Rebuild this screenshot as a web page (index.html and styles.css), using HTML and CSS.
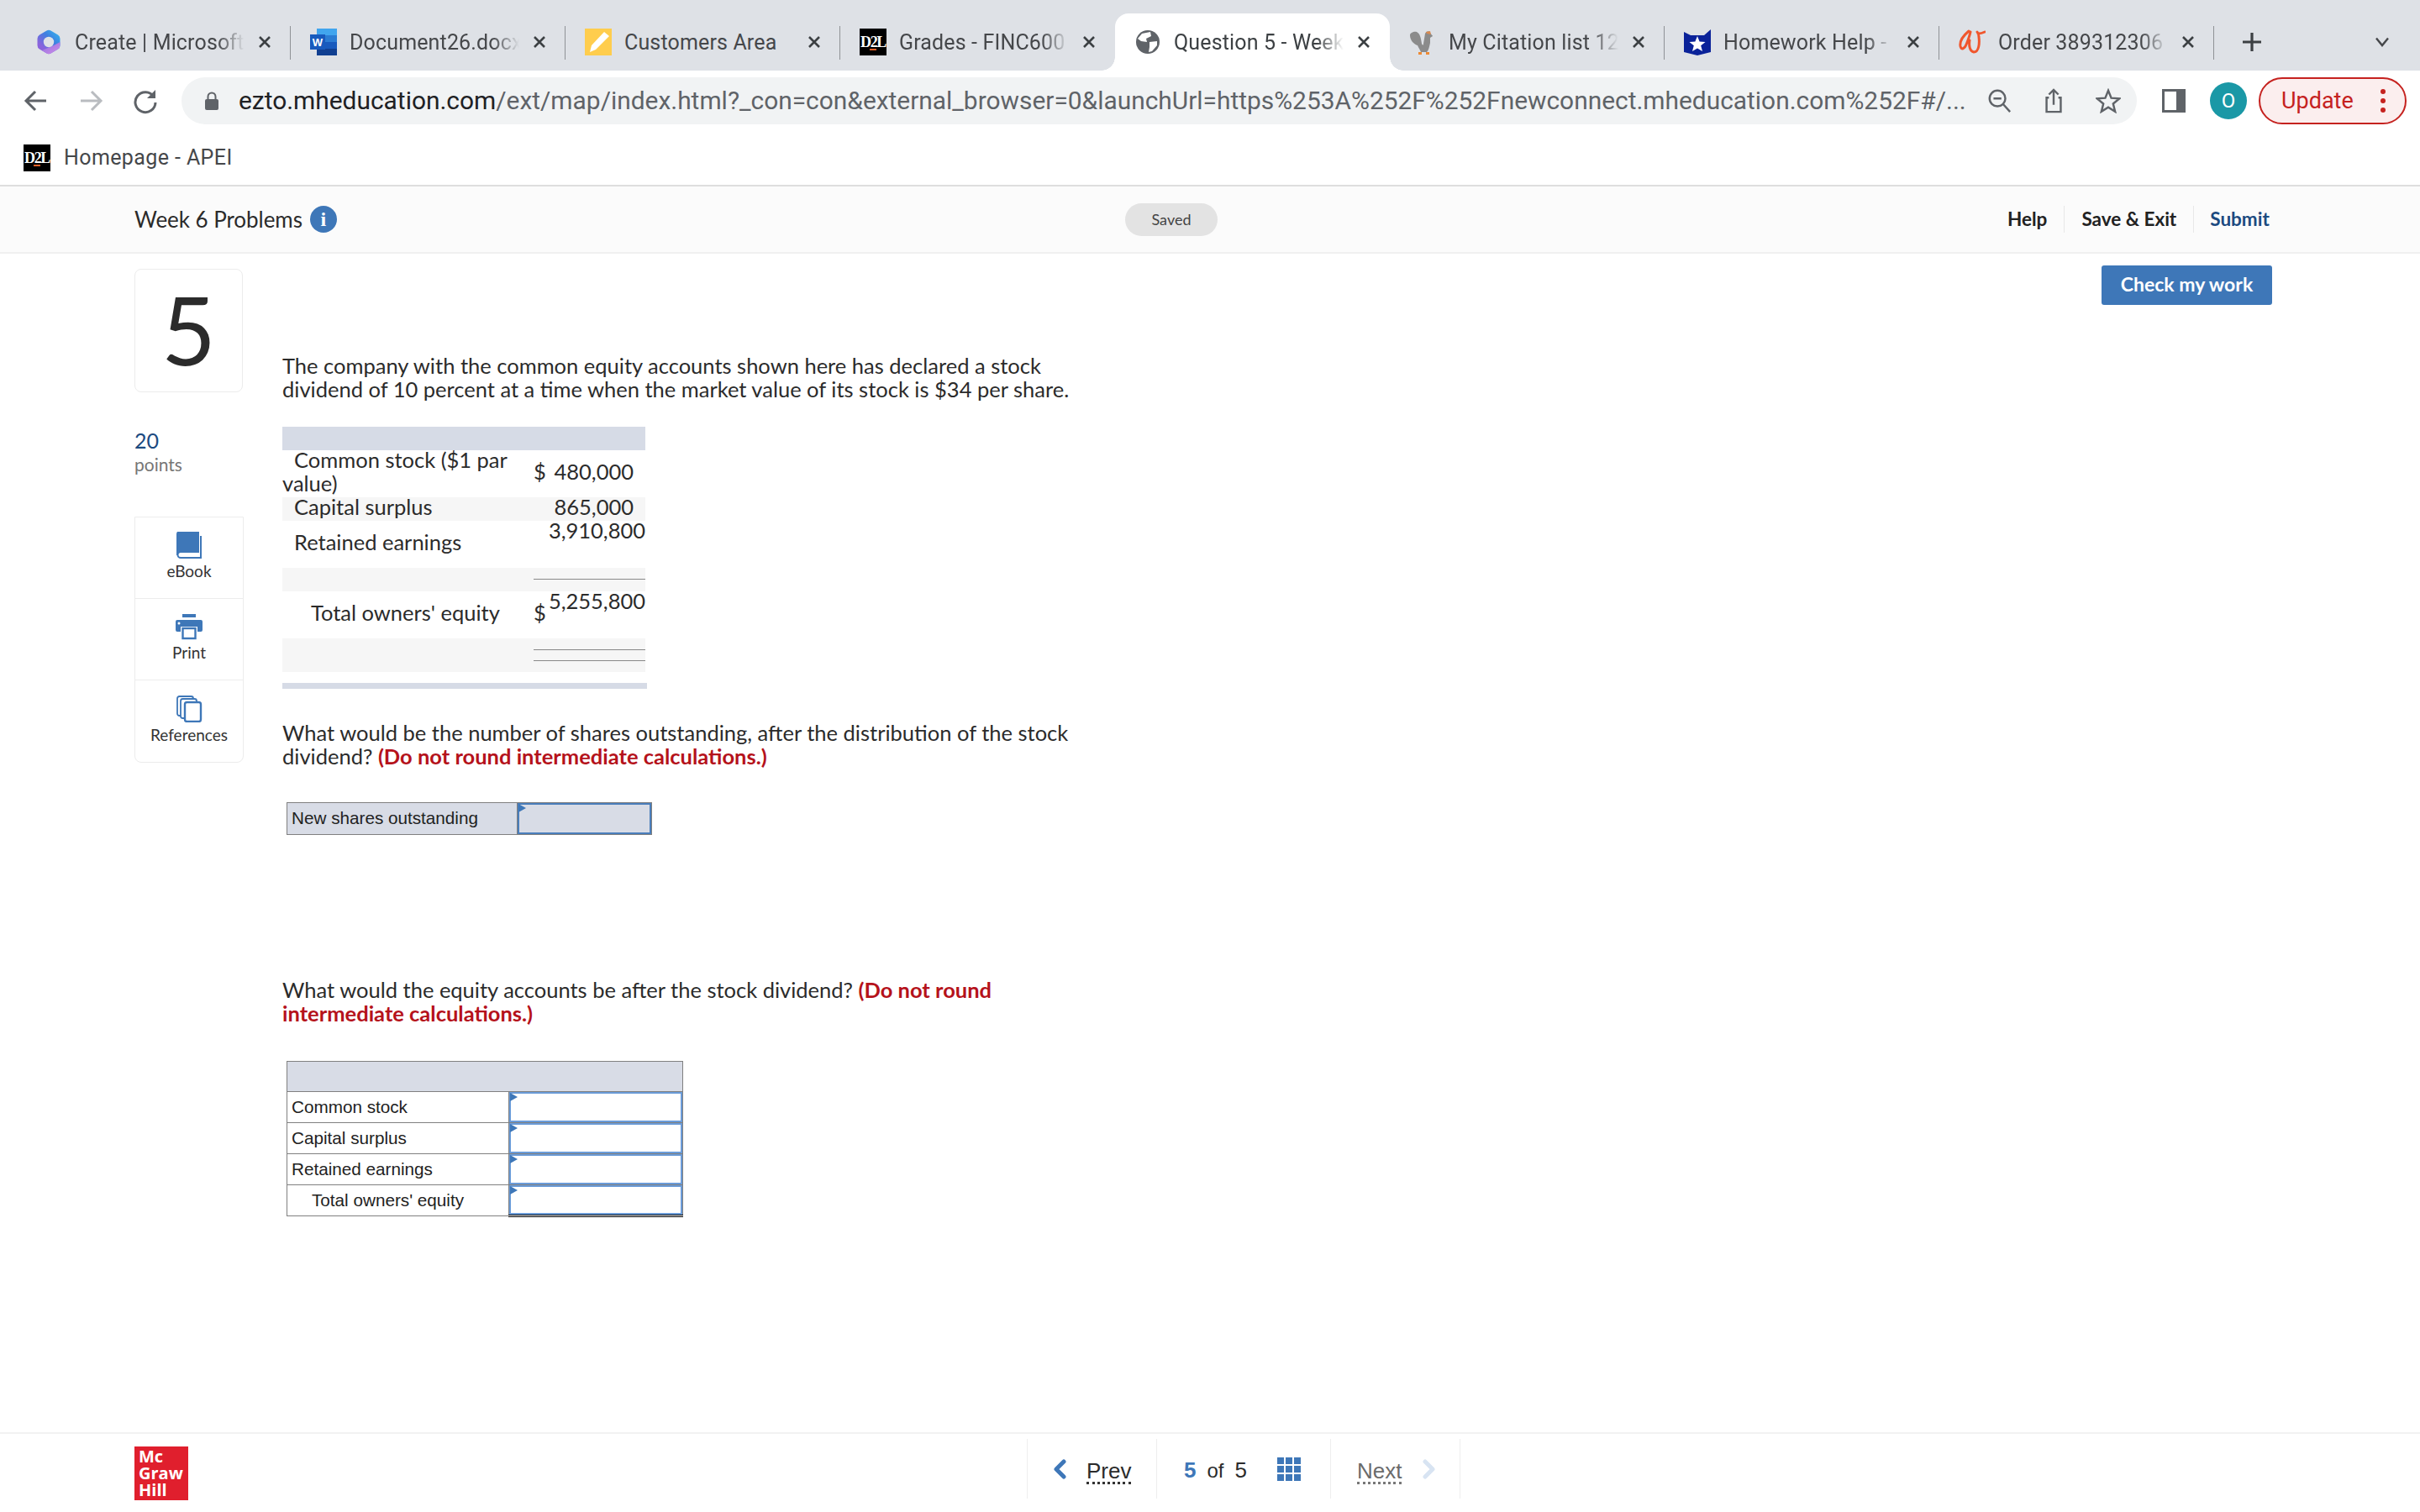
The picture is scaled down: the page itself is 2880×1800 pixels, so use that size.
FILE: index.html
```html
<!DOCTYPE html>
<html lang="en">
<head>
<meta charset="utf-8">
<title>Question 5 - Week 6 Problems</title>
<link rel="stylesheet" href="styles.css">
</head>
<body>
<div class="tabstrip">
  <div class="tab sep">
    <svg class="fav" viewBox="0 0 32 32"><defs><linearGradient id="m1" x1="0.9" y1="0" x2="0.2" y2="0.7"><stop offset="0" stop-color="#35b6ee"/><stop offset=".5" stop-color="#3f7fe0"/><stop offset="1" stop-color="#8a63dc"/></linearGradient><linearGradient id="m2" x1="0" y1="0" x2="1" y2="1"><stop offset="0" stop-color="#8f6fe0"/><stop offset="1" stop-color="#d18ee8"/></linearGradient></defs><path d="M13.500 2.500 Q16 1 18.500 2.500 L27 7.500 Q29.500 9 29.500 12 V20 Q29.500 23 27 24.500 L18.500 29.500 Q16 31 13.500 29.500 L5 24.500 Q2.500 23 2.500 20 V12 Q2.500 9 5 7.500 Z" fill="url(#m1)"/><path d="M29.500 16 V20 Q29.500 23 27 24.500 L18.500 29.500 Q16 31 13.500 29.500 L8 26 L22 20 Z" fill="url(#m2)"/><circle cx="16" cy="16" r="6.200" fill="#dee1e6"/></svg>
    <span class="title">Create | Microsoft</span><svg class="close" viewBox="0 0 16 16"><path d="M2 2 L14 14 M14 2 L2 14"/></svg>
  </div>
  <div class="tab sep">
    <svg class="fav" viewBox="0 0 32 32"><rect x="8" width="24" height="8" fill="#41a5ee"/><rect x="8" y="8" width="24" height="8" fill="#2b7cd3"/><rect x="8" y="16" width="24" height="8" fill="#185abd"/><rect x="8" y="24" width="24" height="8" fill="#103f91"/><rect y="7" width="18" height="18" fill="#185abd"/><text x="9" y="21" class="favw">W</text></svg>
    <span class="title">Document26.docx</span><svg class="close" viewBox="0 0 16 16"><path d="M2 2 L14 14 M14 2 L2 14"/></svg>
  </div>
  <div class="tab sep">
    <svg class="fav" viewBox="0 0 32 32"><rect width="32" height="32" fill="#ffcd4d"/><path d="M6 28 L8 20 L23 4 L29 9 L13 25 Z" fill="#fff"/></svg>
    <span class="title plain">Customers Area</span><svg class="close" viewBox="0 0 16 16"><path d="M2 2 L14 14 M14 2 L2 14"/></svg>
  </div>
  <div class="tab">
    <span class="d2l">D2L</span>
    <span class="title">Grades - FINC600</span><svg class="close" viewBox="0 0 16 16"><path d="M2 2 L14 14 M14 2 L2 14"/></svg>
  </div>
  <div class="tab active">
    <svg class="fav" viewBox="0 0 32 32"><circle cx="16" cy="16" r="14" fill="#5f6368"/><path d="M9 6 L19 4 L20 9 L14 12 L15 16 L8 15 L4 12 Z M18 16 L27 15 L27 20 L21 27 L17 28 L18 22 Z" fill="#fff"/></svg>
    <span class="title">Question 5 - Week</span><svg class="close" viewBox="0 0 16 16"><path d="M2 2 L14 14 M14 2 L2 14"/></svg>
  </div>
  <div class="tab sep">
    <svg class="fav" viewBox="0 0 32 32"><path d="M1 8 C1 5 6 3 9 4 C13 6 14 11 15 18 C16 20 17 20 17 18 L19 6 C20 3 24 2 25 5 C26 7 28 8 28 9 L25 11 L25 17 C24 22 23 26 21 28 L14 28 C13 25 11 23 10 20 C6 19 1 14 1 8 Z" fill="#8b8b8b"/><path d="M20 4 L25 3 L26 7 L21 6 Z" fill="#d98a50"/><rect x="11" y="28" width="4" height="3" fill="#ee8a33"/><rect x="20" y="28" width="4" height="3" fill="#ee8a33"/></svg>
    <span class="title">My Citation list 12</span><svg class="close" viewBox="0 0 16 16"><path d="M2 2 L14 14 M14 2 L2 14"/></svg>
  </div>
  <div class="tab sep">
    <svg class="fav" viewBox="0 0 32 32"><path d="M0 4 L8 8 L24 8 L32 1 V28 L16 32 L0 28 Z" fill="#0a2299"/><path d="M16 9 L18.600 15.600 L25.500 16 L20.200 20.300 L22 27 L16 23.400 L10 27 L11.800 20.300 L6.500 16 L13.400 15.600 Z" fill="#fff"/></svg>
    <span class="title">Homework Help -</span><svg class="close" viewBox="0 0 16 16"><path d="M2 2 L14 14 M14 2 L2 14"/></svg>
  </div>
  <div class="tab sep">
    <svg class="fav" viewBox="0 0 32 32"><path d="M12 3 C6 8 1 15 2 21 C3 26 7 24 9 19 C11 14 13 9 14 4 M13 14 C12 20 13 27 18 28 C24 28 25 18 24 10 C24 7 23 5 22 4 M23 6 C26 6 29 5 31 4" fill="none" stroke="#f0562d" stroke-width="3" stroke-linecap="round"/></svg>
    <span class="title">Order 389312306</span><svg class="close" viewBox="0 0 16 16"><path d="M2 2 L14 14 M14 2 L2 14"/></svg>
  </div>
  <svg class="plus" viewBox="0 0 24 24"><path d="M12 1 V23 M1 12 H23" stroke="#3c4043" stroke-width="3.200"/></svg>
  <svg class="tabmenu" viewBox="0 0 18 12"><path d="M2 1.500 L9 10 L16 1.500" fill="none" stroke="#45474a" stroke-width="2.400"/></svg>
</div>

<div class="toolbar">
  <svg class="navicon" viewBox="0 0 32 32"><path d="M28 16 H5 M15 5 L4 16 L15 27" fill="none" stroke="#5f6368" stroke-width="3"/></svg>
  <svg class="navicon" viewBox="0 0 32 32"><path d="M4 16 H27 M17 5 L28 16 L17 27" fill="none" stroke="#b9bcc0" stroke-width="3"/></svg>
  <svg class="navicon" viewBox="0 0 32 32"><path d="M26 11 A12 12 0 1 0 28 18" fill="none" stroke="#5f6368" stroke-width="3"/><path d="M28 3 V13 H18 Z" fill="#5f6368"/></svg>
  <div class="omnibox">
    <svg class="lock" viewBox="0 0 18 24"><path d="M4.500 10 V7 A4.500 4.500 0 0 1 13.500 7 V10" fill="none" stroke="#5f6368" stroke-width="2"/><rect x="1" y="10" width="16" height="13" rx="2" fill="#5f6368"/></svg>
    <span class="url"><b>ezto.mheducation.com</b>/ext/map/index.html?_con=con&amp;external_browser=0&amp;launchUrl=https%253A%252F%252Fnewconnect.mheducation.com%252F#/...</span>
    <svg class="omni-ic" viewBox="0 0 32 32"><circle cx="14" cy="13" r="10" fill="none" stroke="#5f6368" stroke-width="2.600"/><path d="M21 20 L30 30 M9 13 H19" stroke="#5f6368" stroke-width="2.600"/></svg>
    <svg class="omni-ic" viewBox="0 0 32 32"><path d="M10 12 H7 V30 H25 V12 H22 M16 21 V2 M10 8 L16 2 L22 8" fill="none" stroke="#5f6368" stroke-width="2.600"/></svg>
    <svg class="omni-ic" viewBox="0 0 32 32"><path d="M16 3 L19.800 12.400 L30 13.200 L22.200 19.700 L24.700 29.700 L16 24.300 L7.300 29.700 L9.800 19.700 L2 13.200 L12.200 12.400 Z" fill="none" stroke="#5f6368" stroke-width="2.600"/></svg>
  </div>
  <svg class="panel" viewBox="0 0 28 28"><rect width="28" height="28" fill="#5f6368"/><rect x="3" y="3" width="14" height="22" fill="#fff"/></svg>
  <span class="avatar">O</span>
  <div class="update"><span>Update</span><span class="dots"><i></i><i></i><i></i></span></div>
</div>

<div class="bookmarks"><span class="d2l">D2L</span><span class="bm-text">Homepage - APEI</span></div>

<header class="qhead">
  <div class="qhead-left"><span class="qhead-title">Week 6 Problems</span>
    <span class="info">i</span></div>
  <span class="saved">Saved</span>
  <nav class="qnav"><a class="qnav-help">Help</a><a class="qnav-save">Save &amp; Exit</a><a class="qnav-submit">Submit</a></nav>
</header>

<main class="main">
  <aside class="side">
    <div class="qnum">5</div>
    <div class="pts">20</div>
    <div class="pts-label">points</div>
    <div class="tools">
      <div class="tool">
        <svg class="tool-ic" viewBox="0 0 30 32"><path d="M1 28 V3 A3 3 0 0 1 4 0 H26 V24 H5 A3 3 0 0 0 5 31 H29 V5" fill="none" stroke="#3e77b8" stroke-width="2"/><path d="M1 28 V3 A3 3 0 0 1 4 0 H25 V24 H5 A4 4 0 0 0 1 28 Z" fill="#3e77b8"/></svg>
        <span>eBook</span>
      </div>
      <div class="tool">
        <svg class="tool-ic" viewBox="0 0 32 32"><rect x="8" y="1" width="16" height="4" fill="#3e77b8"/><path d="M2 8 H30 A2 2 0 0 1 32 10 V20 A2 2 0 0 1 30 22 H26 V16 H6 V22 H2 A2 2 0 0 1 0 20 V10 A2 2 0 0 1 2 8 Z" fill="#3e77b8"/><circle cx="4" cy="12" r="1.500" fill="#fff"/><rect x="8.500" y="18" width="15" height="12" fill="#fff" stroke="#3e77b8" stroke-width="2.400"/></svg>
        <span>Print</span>
      </div>
      <div class="tool">
        <svg class="tool-ic" viewBox="0 0 30 32"><g fill="#fff" stroke="#3e77b8" stroke-width="1.800"><rect x="1" y="1" width="19" height="23" rx="2.500"/><rect x="5" y="4" width="19" height="23" rx="2.500"/></g><rect x="10" y="8" width="19" height="23" rx="2.500" fill="#fff" stroke="#3e77b8" stroke-width="2.400"/></svg>
        <span>References</span>
      </div>
    </div>
  </aside>

  <section class="question">
    <p class="q-intro">The company with the common equity accounts shown here has declared a stock<br>dividend of 10 percent at a time when the market value of its stock is $34 per share.</p>
    <table class="equity">
      <colgroup><col class="c-lab"><col class="c-cur"><col class="c-val"></colgroup>
      <tr class="eq-head"><td colspan="3"></td></tr>
      <tr class="h56"><td class="lab"><div class="t"><span class="ind">Common stock ($1 par</span><br>value)</div></td><td class="cur"><div class="t">$</div></td><td class="val pad"><div class="t">480,000</div></td></tr>
      <tr class="alt"><td class="lab ind-cell"><div class="t">Capital surplus</div></td><td class="cur"></td><td class="val pad"><div class="t">865,000</div></td></tr>
      <tr class="h56"><td class="lab ind-cell"><div class="t">Retained earnings</div></td><td class="cur"></td><td class="val top"><div class="t">3,910,800</div></td></tr>
      <tr class="alt"><td></td><td colspan="2" class="rule"><i></i></td></tr>
      <tr class="h56"><td class="lab ind2"><div class="t">Total owners' equity</div></td><td class="cur"><div class="t">$</div></td><td class="val top"><div class="t">5,255,800</div></td></tr>
      <tr class="alt h40"><td></td><td colspan="2" class="rule dbl"><i></i><i></i></td></tr>
    </table>
    <div class="eq-foot"></div>

    <p class="q2">What would be the number of shares outstanding, after the distribution of the stock<br>dividend? <strong>(Do not round intermediate calculations.)</strong></p>
    <table class="answer shares">
      <colgroup><col class="c-s1"><col></colgroup>
      <tr><td class="a-lab">New shares outstanding</td><td class="a-in"></td></tr>
    </table>

    <p class="q3">What would the equity accounts be after the stock dividend? <strong>(Do not round<br>intermediate calculations.)</strong></p>
    <table class="answer accounts">
      <colgroup><col class="c-a1"><col></colgroup>
      <tr class="a-head"><td colspan="2"></td></tr>
      <tr><td class="a-lab">Common stock</td><td class="a-in"></td></tr>
      <tr><td class="a-lab">Capital surplus</td><td class="a-in"></td></tr>
      <tr><td class="a-lab">Retained earnings</td><td class="a-in"></td></tr>
      <tr><td class="a-lab a-ind">Total owners' equity</td><td class="a-in a-total"></td></tr>
    </table>
  </section>

  <button class="check">Check my work</button>
</main>

<footer class="foot">
  <div class="logo-slot"><div class="logo">Mc<br>Graw<br>Hill</div></div>
  <div class="pager">
    <div class="pg pg-prev">
      <svg class="chev" viewBox="0 0 16 24"><path d="M13 3 L4 12 L13 21" fill="none" stroke="#3e77b8" stroke-width="5" stroke-linecap="round" stroke-linejoin="round"/></svg>
      <span class="pg-link">Prev</span>
    </div>
    <div class="pg pg-mid">
      <span class="pg-cur">5</span><span class="pg-of">of</span><span class="pg-tot">5</span>
      <span class="pg-grid"><i></i><i></i><i></i><i></i><i></i><i></i><i></i><i></i><i></i></span>
    </div>
    <div class="pg pg-next">
      <span class="pg-link dim">Next</span>
      <svg class="chev" viewBox="0 0 16 24"><path d="M3 3 L12 12 L3 21" fill="none" stroke="#d8e4f2" stroke-width="5" stroke-linecap="round" stroke-linejoin="round"/></svg>
    </div>
  </div>
</footer>
</body>
</html>
```
FILE: styles.css
```css
* { box-sizing: border-box; }
html, body { margin: 0; padding: 0; }
body { width: 2880px; height: 1800px; overflow: hidden; display: flex; flex-direction: column; background: #fff; font-family: "Lato", "Liberation Sans", sans-serif; color: #2b2b2b; }

/* browser chrome */
.tabstrip { flex: 0 0 84px; background: #dee1e6; display: flex; align-items: flex-end; padding-left: 19px; position: relative; font-family: "Roboto", sans-serif; }
.tab { flex: 0 0 327px; min-width: 0; width: 327px; height: 68px; display: flex; align-items: center; padding: 0 23px 0 23px; position: relative; font-size: 25px; letter-spacing: 0.15px; color: #45474a; }
.tab.sep::after { content: ""; position: absolute; right: 0; top: 15px; width: 1.500px; height: 40px; background: #8f9296; }
.tab.active { background: #fff; border-radius: 16px 16px 0 0; color: #3c4043; }
.tab.active::before, .tab.active::after { content: ""; position: absolute; bottom: 0; width: 16px; height: 16px; }
.tab.active::before { left: -16px; background: radial-gradient(circle at 0 0, #dee1e6 15.500px, #fff 16px); }
.tab.active::after { right: -16px; background: radial-gradient(circle at 100% 0, #dee1e6 15.500px, #fff 16px); }
.fav { width: 32px; height: 32px; flex: none; }
.favw { font: bold 13px "Liberation Sans", sans-serif; fill: #fff; text-anchor: middle; }
.d2l { flex: none; position: relative; width: 32px; height: 32px; background: #000; color: #fff; font: bold 18px/1 "Liberation Serif", serif; letter-spacing: -1.400px; display: flex; justify-content: center; align-items: center; overflow: hidden; }
.d2l::after { content: ""; position: absolute; left: 12px; bottom: 6px; width: 8px; height: 2px; background: #e8622a; }
.title { flex: 1 1 0; min-width: 0; margin-left: 15px; white-space: nowrap; overflow: hidden; -webkit-mask-image: linear-gradient(90deg, #000 calc(100% - 32px), transparent); mask-image: linear-gradient(90deg, #000 calc(100% - 32px), transparent); }
.title.plain { -webkit-mask-image: none; mask-image: none; }
.close { flex: none; margin-left: 16px; width: 16px; height: 16px; fill: none; stroke: #3c4043; stroke-width: 2.600; }
.plus { width: 24px; height: 24px; margin: 0 0 22px 33px; flex: none; }
.tabmenu { width: 18px; height: 12px; margin: 0 0 28px 134px; flex: none; }

.toolbar { flex: 0 0 88px; display: flex; align-items: flex-start; padding: 8px 16px 0 27px; background: #fff; font-family: "Roboto", sans-serif; }
.navicon { width: 32px; height: 32px; margin: 12px 33px 0 0; flex: none; }
.omnibox { width: 2327px; height: 56px; margin-left: -6px; background: #f1f3f4; border-radius: 28px; display: flex; align-items: center; padding-left: 27px; flex: none; }
.lock { width: 18px; height: 24px; flex: none; }
.url { margin-left: 23px; width: 2080px; flex: none; white-space: nowrap; overflow: hidden; font-size: 29.900px; line-height: 40px; color: #5f6368; }
.url b { font-weight: 400; color: #202124; }
.omni-ic { width: 30px; height: 30px; flex: none; margin-right: 35px; }
.panel { width: 28px; height: 28px; margin: 14px 0 0 30px; flex: none; }
.avatar { flex: none; width: 44px; height: 44px; border-radius: 50%; margin: 6px 0 0 29px; background: #1a98a6; color: #fff; font-size: 24px; display: flex; align-items: center; justify-content: center; }
.update { flex: none; width: 176px; height: 56px; margin-left: 14px; border: 2px solid #c5221f; border-radius: 28px; background: #fbeeee; color: #c5221f; font-size: 27px; display: flex; align-items: center; padding-left: 25px; justify-content: space-between; padding-right: 23px; }
.dots { display: flex; flex-direction: column; gap: 5px; }
.dots i { width: 6px; height: 6px; border-radius: 50%; background: #c5221f; display: block; }

.bookmarks { flex: 0 0 50px; padding: 0 0 0 28px; display: flex; align-items: flex-start; background: #fff; font-family: "Roboto", sans-serif; border-bottom: 2px solid #dedede; }
.bm-text { margin-left: 16px; font-size: 25px; letter-spacing: 0.4px; line-height: 32px; color: #45474a; }

/* assignment header */
.qhead { flex: 0 0 80px; background: #fbfbfb; border-bottom: 2px solid #f0f0f0; display: flex; align-items: center; padding-left: 160px; }
.qhead-left { flex: 0 0 1179px; display: flex; align-items: center; }
.qhead-title { font-size: 26px; letter-spacing: -0.05px; color: #2b2b2b; }
.info { width: 32px; height: 32px; border-radius: 50%; margin-left: 9px; background: #3e77b8; color: #fff; font: bold 24px/32px "Liberation Serif", serif; text-align: center; }
.saved { width: 110px; height: 39px; border-radius: 20px; background: #e3e3e3; font-size: 18px; line-height: 39px; text-align: center; color: #444; }
.qnav { margin-left: 940px; display: flex; align-items: center; font-size: 22.500px; font-weight: 700; color: #222; }
.qnav a { display: block; height: 32px; line-height: 32px; }
.qnav-help { padding-right: 20px; border-right: 1px solid #e8e8e8; }
.qnav-save { padding: 0 20px; border-right: 1px solid #e8e8e8; }
.qnav-submit { padding-left: 19px; color: #1c4a80; }

/* main */
.main { flex: 1 1 auto; display: flex; align-items: flex-start; padding: 14px 176px 0 160px; min-height: 0; }
.side { flex: 0 0 130px; margin-top: 4px; }
.qnum { width: 129px; height: 147px; border: 1px solid #ececec; border-radius: 8px; font-size: 112px; line-height: 141px; text-align: center; color: #2b2b2b; }
.pts { margin-top: 42px; font-size: 25px; line-height: 30px; color: #1c4a80; }
.pts-label { font-size: 21px; line-height: 28px; color: #767676; }
.tools { margin-top: 48px; border: 1px solid #ececec; border-radius: 0 0 8px 8px; width: 130px; }
.tool { height: 97px; display: flex; flex-direction: column; align-items: center; justify-content: flex-end; padding-bottom: 20px; font-size: 19px; line-height: 24px; color: #333; border-bottom: 1px solid #ececec; }
.tool:last-child { border-bottom: 0; }
.tool-ic { width: 32px; height: 32px; margin-bottom: 3px; }

.question { flex: 0 0 auto; width: 1000px; margin-left: 46px; font-size: 25.500px; line-height: 28px; color: #2b2b2b; }
.question p { margin: 0; }
.question strong { color: #b5121b; }
.question .q-intro { margin-top: 105px; }
.equity { margin-top: 31px; border-collapse: collapse; width: 432px; table-layout: fixed; }
.c-lab { width: 299px; }
.c-cur { width: 15px; }
.c-val { width: 118px; }
.equity td { padding: 0; height: 28px; line-height: 28px; }
.equity td.cur { vertical-align: middle; }
.t { margin: -3px 0 3px; }
.eq-head td { background: #d6dbe6; height: 28px; }
.equity .h56 td { height: 56px; }
.equity .h40 td { height: 40px; }
.equity .alt td { background: #f6f6f6; }
.ind { margin-left: 14px; }
.equity .ind-cell { padding-left: 14px; }
.equity .ind2 { padding-left: 34px; }
.val { text-align: right; vertical-align: middle; }
.equity .val.pad { padding-right: 14px; }
.equity .val.top { vertical-align: top; }
.equity .rule { vertical-align: top; padding-top: 13px; }
.rule i { display: block; height: 1px; background: #888; }
.rule.dbl i + i { margin-top: 12px; }
.eq-foot { height: 7px; width: 434px; margin-top: 13px; background: #d6dbe6; }

.question .q2 { margin-top: 38px; }
.answer { border-collapse: collapse; font: 20.700px/1 "Liberation Sans", Arial, sans-serif; color: #222; table-layout: fixed; margin-left: 5px; }
.answer td { border: 1.500px solid #808080; padding: 0; }
.shares { margin-top: 41px; width: 435px; background: #d8dce6; }
.shares td { height: 38px; }
.c-s1 { width: 274px; }
.c-a1 { width: 264px; }
.answer .a-lab { padding-left: 5px; }
.a-in { position: relative; box-shadow: inset 0 0 0 2px #6a9bd8; }
.shares .a-in { box-shadow: inset 0 0 0 2px #4a7ebb; }
.a-in::before { content: ""; position: absolute; left: 1px; top: 1px; border-left: 9px solid #3e77b8; border-top: 5px solid transparent; border-bottom: 5px solid transparent; }
.question .q3 { margin-top: 170px; }
.accounts { margin-top: 43px; width: 472px; }
.accounts td { height: 37px; }
.a-head td { background: #d8dce6; height: 36px; }
.answer .a-ind { padding-left: 29px; }
.answer .a-total { border-top: 1.500px solid #000; border-bottom: 3px double #000; }

.check { flex: none; margin-left: auto; width: 203px; height: 47px; border: 0; border-radius: 3px; padding: 0 0 4px; background: #3e77b8; color: #fff; font: 700 23px "Lato", sans-serif; }

/* footer */
.foot { flex: 0 0 95px; border-top: 2px solid #f2f2f2; display: flex; padding-left: 160px; }
.logo-slot { flex: 0 0 1062px; padding-top: 15px; }
.logo { width: 64px; height: 64px; background: #e01f2d; color: #fff; font: 700 20px/20px "Open Sans", sans-serif; padding: 2px 0 0 5px; }
.pager { display: flex; height: 71px; margin-top: 6px; font-family: "Liberation Sans", sans-serif; font-size: 26px; border-left: 1px solid #eee; }
.pg { display: flex; align-items: center; border-right: 1px solid #eee; height: 71px; }
.pg-prev { width: 154px; padding-left: 30px; gap: 24px; }
.pg-mid { width: 207px; padding-left: 32px; }
.pg-next { width: 154px; padding-left: 31px; gap: 25px; }
.chev { width: 16px; height: 24px; flex: none; }
.pg-link { margin-top: 8px; color: #2b2b2b; border-bottom: 3px dotted #333; line-height: 26px; }
.pg-link.dim { color: #6b6b6b; border-color: #777; }
.pg-cur { color: #3e77b8; font-weight: 700; margin-top: 4px; }
.pg-of { margin: 4px 0 0 13px; font-size: 24px; }
.pg-tot { margin: 4px 0 0 13px; }
.pg-grid { margin-left: 36px; width: 28px; height: 28px; display: grid; grid-template-columns: repeat(3, 8px); grid-auto-rows: 8px; gap: 2px; }
.pg-grid i { background: #3e77b8; }
```
